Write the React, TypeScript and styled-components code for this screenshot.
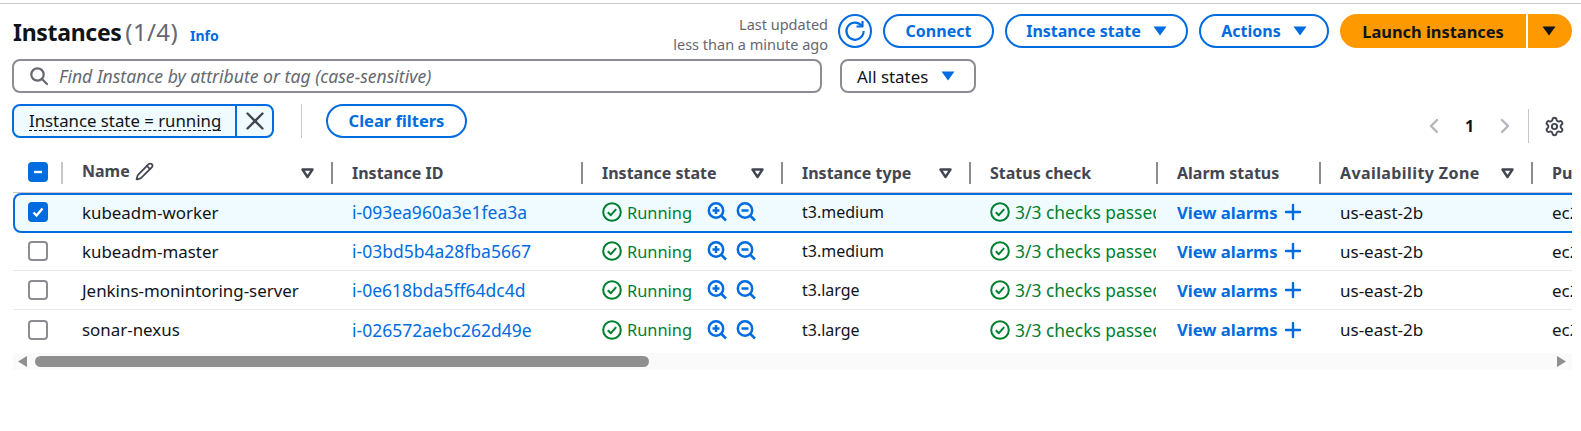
import { ChevronLeft, ChevronRight, Pencil, Plus, Settings, X } from "lucide-react"
import styled, { createGlobalStyle } from "styled-components"

const GlobalStyle = createGlobalStyle`
    html, body {
        margin: 0;
        padding: 0;
        background: #fff;
        font-family: "Noto Sans", "Liberation Sans", sans-serif;
        font-size: 16px;
        color: #0f141a;
    }
`

const Page = styled.div`
    width: 1581px;
    height: 431px;
    overflow: hidden;
    box-sizing: border-box;
    position: relative;
    padding: 14px 9px 0 13px;
    &::before {
        content: "";
        position: absolute;
        left: 0;
        right: 0;
        top: 3px;
        height: 1px;
        background: #c6c6cd;
    }
`

const TopRow = styled.div`
    display: flex;
    justify-content: space-between;
    align-items: flex-start;
    height: 45px;
`

const TitleBlock = styled.div`
    display: flex;
    align-items: baseline;
    gap: 12px;
    padding-top: 2px;
`

const Title = styled.h1`
    margin: 0;
    font-size: 23px;
    line-height: 32px;
    font-weight: 700;
    letter-spacing: -0.3px;
    span {
        font-size: 24px;
        font-weight: 400;
        letter-spacing: 0.4px;
        margin-left: -2px;
        color: #656871;
    }
`

const InfoLink = styled.a`
    font-size: 14px;
    font-weight: 700;
    color: #006ce0;
`

const Actions = styled.div`
    display: flex;
    align-items: flex-start;
    gap: 11px;
`

const Updated = styled.div`
    font-size: 14.5px;
    line-height: 20px;
    margin-right: -1px;
    color: #656871;
    text-align: right;
    white-space: nowrap;
`

const RefreshButton = styled.button`
    width: 34px;
    height: 34px;
    box-sizing: border-box;
    border: 2px solid #006ce0;
    border-radius: 50%;
    background: #fff;
    padding: 0;
    display: flex;
    align-items: center;
    justify-content: center;
`

const PillButton = styled.button<{ $width: number }>`
    width: ${p => p.$width}px;
    height: 34px;
    box-sizing: border-box;
    border: 2px solid #006ce0;
    border-radius: 17px;
    background: #fff;
    color: #006ce0;
    font-family: inherit;
    font-size: 16px;
    font-weight: 700;
    padding: 0;
    display: flex;
    align-items: center;
    justify-content: center;
    gap: 12px;
    white-space: nowrap;
`

const ClearButton = styled(PillButton)`
    font-size: 16.5px;
    padding-bottom: 2px;
`

const SplitButton = styled.div`
    display: flex;
    gap: 2px;
`

const LaunchMain = styled.button`
    width: 186px;
    height: 34px;
    border: 0;
    padding: 0;
    border-radius: 17px 0 0 17px;
    background: #ff9900;
    color: #0f141a;
    font-family: inherit;
    font-size: 16.4px;
    font-weight: 700;
`

const LaunchCaret = styled.button`
    width: 44px;
    height: 34px;
    border: 0;
    padding: 0 3px 0 0;
    border-radius: 0 17px 17px 0;
    background: #ff9900;
    display: flex;
    align-items: center;
    justify-content: center;
`

const SearchRow = styled.div`
    display: flex;
    gap: 18px;
    margin-left: -1px;
`

const SearchBox = styled.div`
    width: 810px;
    height: 34px;
    box-sizing: border-box;
    border: 2px solid #8c8c94;
    border-radius: 8px;
    display: flex;
    align-items: center;
    gap: 10px;
    padding-left: 15px;
    font-size: 17.6px;
    font-style: italic;
    color: #656871;
`

const StateSelect = styled.div`
    width: 136px;
    height: 34px;
    box-sizing: border-box;
    border: 2px solid #8c8c94;
    border-radius: 8px;
    display: flex;
    align-items: center;
    gap: 13px;
    padding-left: 15px;
    font-size: 16.9px;
`

const FilterRow = styled.div`
    display: flex;
    align-items: flex-start;
    justify-content: space-between;
    margin-top: 11px;
    height: 56px;
`

const FilterGroup = styled.div`
    display: flex;
    align-items: center;
    margin-left: -1px;
`

const Chip = styled.div`
    width: 262px;
    height: 34px;
    box-sizing: border-box;
    border: 2px solid #006ce0;
    border-radius: 8px;
    background: #f0fbff;
    display: flex;
    overflow: hidden;
`

const ChipLabel = styled.div`
    width: 223px;
    display: flex;
    align-items: center;
    padding-left: 15px;
    box-sizing: border-box;
    border-right: 2px solid #006ce0;
    font-size: 16.8px;
    span {
        border-bottom: 1px dashed #0f141a;
        line-height: 19px;
    }
`

const ChipClose = styled.div`
    flex: 1;
    display: flex;
    align-items: center;
    justify-content: center;
    color: #424650;
`

const VerticalRule = styled.div`
    width: 1px;
    height: 34px;
    background: #c6c6cd;
    margin: 0 24px 0 27px;
`

const Pagination = styled.div`
    display: flex;
    align-items: center;
    margin: 5px 7px 0 0;
    color: #424650;
`

const PageNumber = styled.span`
    width: 47px;
    text-align: center;
    font-weight: 700;
    font-size: 16px;
    color: #0f141a;
`

const PageRule = styled.div`
    width: 1px;
    height: 34px;
    background: #c6c6cd;
    margin: 0 15px 0 11px;
`

const TableClip = styled.div`
    overflow: hidden;
    width: 1559px;
`

const TableInner = styled.div`
    width: 1900px;
`

const columns = "48px 270px 250px 200px 188px 187px 163px 212px 382px"

const HeaderRow = styled.div`
    display: grid;
    grid-template-columns: ${columns};
    height: 33px;
    box-sizing: border-box;
    border-bottom: 1px solid #c6c6cd;
`

const HeaderCheck = styled.div`
    padding: 2px 0 0 15px;
`

const HeaderCell = styled.div<{ $light?: boolean; $tracking?: number }>`
    position: relative;
    display: flex;
    align-items: center;
    justify-content: space-between;
    height: 26px;
    padding: 0 17px 0 21px;
    font-weight: 700;
    font-size: 16px;
    letter-spacing: ${p => p.$tracking ?? 0}px;
    color: #424650;
    white-space: nowrap;
    &::before {
        content: "";
        position: absolute;
        left: 0;
        top: 2px;
        height: 22px;
        width: 2px;
        background: ${p => (p.$light ? "#c6c6cd" : "#8c8c94")};
    }
`

const NameLabel = styled.span`
    display: flex;
    align-items: center;
    gap: 5px;
    margin-bottom: 4px;
`

const Row = styled.div<{ $selected?: boolean }>`
    display: grid;
    grid-template-columns: ${columns};
    height: 39.2px;
    box-sizing: border-box;
    align-items: center;
    border-bottom: 1px solid #e8e8ea;
    &:last-child {
        border-bottom: 0;
    }
    ${p => p.$selected && `
        height: 40px;
        padding-bottom: 2px;
        background: #f0fbff;
        border-bottom: 0;
        box-shadow: inset 0 0 0 2px #006ce0;
        border-radius: 8px 0 0 8px;
        margin-bottom: -1px;
        position: relative;
    `}
`

const Cell = styled.div<{ $inset?: number; $size?: number }>`
    padding-left: ${p => p.$inset ?? 21}px;
    min-width: 0;
    overflow: hidden;
    white-space: nowrap;
    display: flex;
    align-items: center;
    font-size: ${p => p.$size ?? 16}px;
`

const Box = styled.span<{ $on?: boolean }>`
    width: 20px;
    height: 20px;
    box-sizing: border-box;
    border-radius: 4px;
    display: flex;
    align-items: center;
    justify-content: center;
    background: ${p => (p.$on ? "#006ce0" : "#fff")};
    border: 2px solid ${p => (p.$on ? "#006ce0" : "#8c8c94")};
`

const IdLink = styled.a`
    color: #006ce0;
`

const Status = styled.span`
    display: inline-flex;
    align-items: center;
    gap: 5px;
    color: #00802f;
`

const ZoomIcons = styled.span`
    display: inline-flex;
    gap: 9px;
    margin-left: 15px;
`

const AlarmLink = styled.a`
    display: inline-flex;
    align-items: center;
    gap: 3px;
    font-weight: 700;
    color: #006ce0;
`

const ScrollTrack = styled.div`
    margin-top: 3px;
    height: 17px;
    background: #fafafa;
    width: 1559px;
    display: flex;
    align-items: center;
    justify-content: space-between;
    padding: 0 6px 0 5px;
    box-sizing: border-box;
    position: relative;
`

const ScrollThumb = styled.div`
    position: absolute;
    left: 22px;
    top: 3px;
    width: 614px;
    height: 11px;
    border-radius: 6px;
    background: #8f8f8f;
`

function Caret({ color = "#006ce0" }: { color?: string }) {
    return (
        <svg width="14" height="10" viewBox="0 0 14 10">
            <polygon points="0.5,0.5 13.5,0.5 7,9.5" fill={color} />
        </svg>
    )
}

function SortCaret() {
    return (
        <svg width="13" height="11" viewBox="0 0 13 11">
            <polygon points="1.5,1.5 11.5,1.5 6.5,9" fill="none" stroke="#424650" strokeWidth="2.4" strokeLinejoin="round" />
        </svg>
    )
}

function SearchIcon() {
    return (
        <svg width="20" height="20" viewBox="0 0 20 20" fill="none" stroke="#656871" strokeWidth="2.2" strokeLinecap="round">
            <circle cx="8.5" cy="8.5" r="6.2" />
            <path d="M13 13l5 5" />
        </svg>
    )
}

function RefreshIcon() {
    return (
        <svg width="22" height="22" viewBox="0 0 22 22" fill="none" stroke="#006ce0" strokeWidth="2.2">
            <path d="M17.5 5.5A8.6 8.6 0 1 0 19.6 11" />
            <path d="M12.5 6.5h6v-5.5" strokeLinejoin="round" />
        </svg>
    )
}

function StatusIcon() {
    return (
        <svg width="20" height="20" viewBox="0 0 20 20" fill="none" stroke="#00802f" strokeWidth="2">
            <circle cx="10" cy="10" r="8.8" />
            <path d="M5.8 10.2l3 3 5.4-6" strokeLinejoin="round" />
        </svg>
    )
}

function ZoomIcon({ plus }: { plus?: boolean }) {
    return (
        <svg width="20" height="20" viewBox="0 0 20 20" fill="none" stroke="#006ce0" strokeWidth="2.5">
            <circle cx="9" cy="8.5" r="7.2" />
            <path d="M14 13.5l5 5" />
            <path d="M5.5 8.5h7" />
            {plus && <path d="M9 5v7" />}
        </svg>
    )
}

function ScrollArrow({ right }: { right?: boolean }) {
    return (
        <svg width="9" height="11" viewBox="0 0 9 11">
            <polygon points={right ? "0,0 9,5.5 0,11" : "9,0 0,5.5 9,11"} fill="#8f8f8f" />
        </svg>
    )
}

const instances = [
    { name: "kubeadm-worker", id: "i-093ea960a3e1fea3a", type: "t3.medium", selected: true },
    { name: "kubeadm-master", id: "i-03bd5b4a28fba5667", type: "t3.medium" },
    { name: "Jenkins-monintoring-server", id: "i-0e618bda5ff64dc4d", type: "t3.large" },
    { name: "sonar-nexus", id: "i-026572aebc262d49e", type: "t3.large" },
]

export default function App() {
    return (
        <Page>
            <GlobalStyle />
            <TopRow>
                <TitleBlock>
                    <Title>Instances <span>(1/4)</span></Title>
                    <InfoLink>Info</InfoLink>
                </TitleBlock>
                <Actions>
                    <Updated>Last updated<br />less than a minute ago</Updated>
                    <RefreshButton><RefreshIcon /></RefreshButton>
                    <PillButton $width={111}>Connect</PillButton>
                    <PillButton $width={183}>Instance state <Caret /></PillButton>
                    <PillButton $width={130}>Actions <Caret /></PillButton>
                    <SplitButton>
                        <LaunchMain>Launch instances</LaunchMain>
                        <LaunchCaret><Caret color="#0f141a" /></LaunchCaret>
                    </SplitButton>
                </Actions>
            </TopRow>
            <SearchRow>
                <SearchBox><SearchIcon />Find Instance by attribute or tag (case-sensitive)</SearchBox>
                <StateSelect>All states <Caret /></StateSelect>
            </SearchRow>
            <FilterRow>
                <FilterGroup>
                    <Chip>
                        <ChipLabel><span>Instance state = running</span></ChipLabel>
                        <ChipClose><X size={30} strokeWidth={1.9} /></ChipClose>
                    </Chip>
                    <VerticalRule />
                    <ClearButton $width={141}>Clear filters</ClearButton>
                </FilterGroup>
                <Pagination>
                    <ChevronLeft size={24} color="#b4b4bb" strokeWidth={2.4} />
                    <PageNumber>1</PageNumber>
                    <ChevronRight size={24} color="#b4b4bb" strokeWidth={2.4} />
                    <PageRule />
                    <Settings size={21} strokeWidth={2.2} />
                </Pagination>
            </FilterRow>
            <TableClip>
                <TableInner>
                    <HeaderRow>
                        <HeaderCheck>
                            <Box $on>
                                <svg width="12" height="12" viewBox="0 0 12 12"><path d="M2 6h8" stroke="#fff" strokeWidth="2.4" /></svg>
                            </Box>
                        </HeaderCheck>
                        <HeaderCell $light>
                            <NameLabel>Name <Pencil size={19} strokeWidth={2.2} /></NameLabel>
                            <SortCaret />
                        </HeaderCell>
                        <HeaderCell>Instance ID</HeaderCell>
                        <HeaderCell>Instance state <SortCaret /></HeaderCell>
                        <HeaderCell>Instance type <SortCaret /></HeaderCell>
                        <HeaderCell>Status check</HeaderCell>
                        <HeaderCell>Alarm status</HeaderCell>
                        <HeaderCell $tracking={0.4}>Availability Zone <SortCaret /></HeaderCell>
                        <HeaderCell>Public</HeaderCell>
                    </HeaderRow>
                    {instances.map(item => (
                        <Row key={item.id} $selected={item.selected}>
                            <Cell $inset={15}>
                                <Box $on={item.selected}>
                                    {item.selected && (
                                        <svg width="14" height="14" viewBox="0 0 14 14" fill="none"><path d="M2.5 7.5l3 3 6-7" stroke="#fff" strokeWidth="2.4" /></svg>
                                    )}
                                </Box>
                            </Cell>
                            <Cell $size={16.9}>{item.name}</Cell>
                            <Cell $size={17.5}><IdLink>{item.id}</IdLink></Cell>
                            <Cell $size={16.4}>
                                <Status><StatusIcon />Running</Status>
                                <ZoomIcons><ZoomIcon plus /><ZoomIcon /></ZoomIcons>
                            </Cell>
                            <Cell>{item.type}</Cell>
                            <Cell $size={17.4}><Status><StatusIcon />3/3 checks passed</Status></Cell>
                            <Cell $size={16.6}><AlarmLink>View alarms <Plus size={24} strokeWidth={2.4} /></AlarmLink></Cell>
                            <Cell $size={17}>us-east-2b</Cell>
                            <Cell $size={17}>ec2</Cell>
                        </Row>
                    ))}
                </TableInner>
            </TableClip>
            <ScrollTrack>
                <ScrollArrow />
                <ScrollThumb />
                <ScrollArrow right />
            </ScrollTrack>
        </Page>
    )
}
